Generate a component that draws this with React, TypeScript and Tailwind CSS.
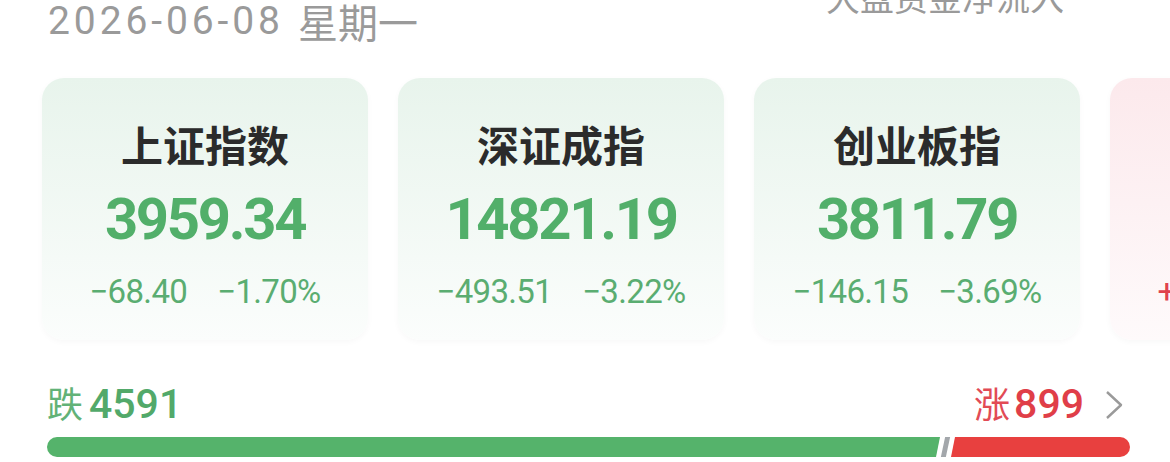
import React from "react";

const num = { fontFamily: "Roboto, 'Noto Sans CJK SC', sans-serif" };
const cjk = { fontFamily: "'Noto Sans CJK SC', Roboto, sans-serif" };

type Card = {
  title: string;
  value: string;
  change: string;
  pct: string;
  up?: boolean;
};

const cards: Card[] = [
  { title: "上证指数", value: "3959.34", change: "−68.40", pct: "−1.70%" },
  { title: "深证成指", value: "14821.19", change: "−493.51", pct: "−3.22%" },
  { title: "创业板指", value: "3811.79", change: "−146.15", pct: "−3.69%" },
  { title: "北证50", value: "1395.62", change: "+12.40", pct: "+0.90%", up: true },
];

function IndexCard({ c }: { c: Card }) {
  return (
    <div
      className={
        "shrink-0 w-[326px] h-[262px] rounded-[22px] flex flex-col items-center shadow-[0_2px_6px_rgba(0,0,0,0.03)] " +
        (c.up
          ? "bg-gradient-to-b from-[#fce9ec] to-[#fefafb]"
          : "bg-gradient-to-b from-[#e8f4ec] to-[#fbfdfc]")
      }
    >
      <div
        className="mt-[40px] text-[42px] leading-[52px] font-bold text-[#2b2b2b]"
        style={cjk}
      >
        {c.title}
      </div>
      <div
        className={
          "mt-[17px] text-[58px] leading-[64px] font-bold tracking-[-0.04em] " +
          (c.up ? "text-[#e0424d]" : "text-[#52af6a]")
        }
        style={num}
      >
        {c.value}
      </div>
      <div
        className={
          "mt-[21px] flex gap-[30px] text-[33px] leading-[40px] tracking-[-0.02em] " +
          (c.up ? "text-[#e0424d]" : "text-[#5aad71]")
        }
        style={num}
      >
        <span>{c.change}</span>
        <span>{c.pct}</span>
      </div>
    </div>
  );
}

export default function App() {
  return (
    <div className="w-[1170px] h-[462px] bg-white overflow-hidden">
      <div className="h-[78px] flex justify-between items-start">
        <div className="ml-[48px] text-[39px] leading-[42px] text-[#9a9a9a] flex">
          <span className="tracking-[0.1em]" style={num}>
            2026-06-08
          </span>
          <span className="ml-[14px] text-[40px]" style={cjk}>
            星期一
          </span>
        </div>
        <div
          className="mr-[106px] mt-[-23px] text-[34px] leading-[40px] text-[#9a9a9a]"
          style={cjk}
        >
          大盘资金净流入
        </div>
      </div>

      <div className="flex gap-[30px] pl-[42px]">
        {cards.map((c) => (
          <IndexCard key={c.title} c={c} />
        ))}
      </div>

      <div className="mt-[44px] pl-[47px] pr-[46px] flex items-center justify-between h-[42px]">
        <div className="flex items-baseline gap-[6px]">
          <span className="text-[36px] text-[#62b277]" style={cjk}>
            跌
          </span>
          <span className="text-[41px] font-medium text-[#52a96a]" style={num}>
            4591
          </span>
        </div>
        <div className="flex items-center">
          <div className="flex items-baseline gap-[4px]">
            <span className="text-[36px] text-[#e24b55]" style={cjk}>
              涨
            </span>
            <span className="text-[41px] font-medium text-[#e03e48]" style={num}>
              899
            </span>
          </div>
          <svg className="ml-[20px]" width="20" height="30" viewBox="0 0 20 30" fill="none">
            <polyline
              points="3,2 17,15 3,28"
              stroke="#9a9a9a"
              strokeWidth="2.4"
              strokeLinejoin="round"
            />
          </svg>
        </div>
      </div>

      <div className="mt-[11px] ml-[47px] mr-[40px] h-[20px] flex gap-[3px]">
        <div className="flex-[893] h-full bg-[#55b36b] rounded-l-full [clip-path:polygon(0_0,100%_0,calc(100%_-_4px)_100%,0_100%)]" />
        <div className="w-[5px] h-full bg-[#a3a7ab] -skew-x-12" />
        <div className="flex-[179] h-full bg-[#e8403f] rounded-r-full [clip-path:polygon(4px_0,100%_0,100%_100%,0_100%)]" />
      </div>
    </div>
  );
}
